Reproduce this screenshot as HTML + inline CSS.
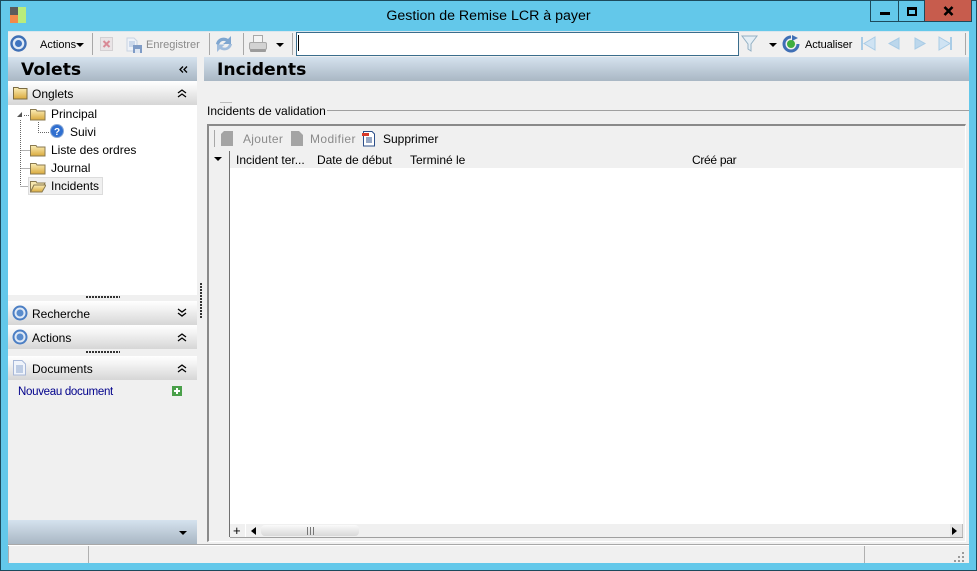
<!DOCTYPE html>
<html><head><meta charset="utf-8"><style>
html,body{margin:0;padding:0}
body{width:977px;height:571px;overflow:hidden;position:relative;background:#63c8ea;font-family:"Liberation Sans",sans-serif;font-size:12px;color:#000}
div,span,svg{position:absolute}
.t{white-space:nowrap;line-height:14px}
.hd{background:linear-gradient(#d5e2ee,#a9b7c4)}
.pn{left:8px;width:189px;height:24px;background:linear-gradient(#fff,#f4f4f4 30%,#d6d6d6)}
.sep{width:1px;height:22px;top:33px;background:#a8a8a8}
.g{color:#8a8a8a}
.h{font-family:"DejaVu Sans",sans-serif;font-size:17.2px;font-weight:bold;line-height:21px}
</style></head><body>
<svg width="0" height="0" style="left:0;top:0"><defs>
<linearGradient id="fo" x1="0" y1="0" x2="0" y2="1"><stop offset="0" stop-color="#fbeeb8"/><stop offset="1" stop-color="#d9a93c"/></linearGradient>
</defs></svg>
<div style="left:0;top:0;width:975px;height:569px;border:1px solid #1c4a5c"></div>
<div style="left:10px;top:7px;width:8px;height:8px;background:#5c5c5c"></div>
<div style="left:10px;top:15px;width:8px;height:8px;background:#f28a4a"></div>
<div style="left:18px;top:7px;width:8px;height:16px;background:#b9ec7c"></div>
<div class="t" style="left:0;width:977px;top:8px;text-align:center;font-size:14.2px;line-height:17px">Gestion de Remise LCR à payer</div>
<div style="left:870px;top:0;width:54px;border:1px solid #1c4a5c;border-top:0;height:21px"></div>
<div style="left:898px;top:0;width:1px;height:21px;background:#1c4a5c"></div>
<div style="left:924px;top:0;width:46px;height:21px;background:#c75c4d;border:1px solid #1c4a5c;border-top:0"></div>
<div style="left:880px;top:12px;width:10px;height:3px;background:#000"></div>
<div style="left:907px;top:7px;width:6px;height:4px;border:2px solid #000;border-top-width:3px"></div>
<svg style="left:943px;top:6px" width="11" height="10"><path d="M1.500 1L9.500 9M9.500 1L1.500 9" stroke="#000" stroke-width="2.600"/></svg>

<div style="left:8px;top:31px;width:961px;height:532px;background:#f0f0f0"></div>
<div style="left:8px;top:31px;width:961px;height:1px;background:#d9e6ee"></div>

<svg style="left:10px;top:35px" width="18" height="18"><circle cx="8.500" cy="8.500" r="7" fill="#dfe9f6" stroke="#3f6fb5" stroke-width="2.400"/><circle cx="8.500" cy="8.500" r="3.500" fill="#3f74c0"/></svg>
<div class="t" style="left:40px;top:38px;font-size:11px">Actions</div>
<svg style="left:76px;top:43px" width="9" height="5"><path d="M0 0H8L4 4Z" fill="#000"/></svg>
<div class="sep" style="left:92px"></div>
<svg style="left:100px;top:37px" width="14" height="15"><rect x="0.500" y="0.500" width="12" height="13" fill="#e9e4e6" stroke="#d3d0d2"/><path d="M3.500 4L9.500 10M9.500 4L3.500 10" stroke="#d98a96" stroke-width="2"/></svg>
<svg style="left:126px;top:37px" width="17" height="16"><path d="M1 1H8L11 4V14H1Z" fill="#eef2f8" stroke="#c8d3e2"/><path d="M3 5H9M3 7H9M3 9H9" stroke="#a8bedb"/><rect x="7" y="8" width="9" height="8" fill="#7f9cc6"/><rect x="9" y="12" width="5" height="4" fill="#dfe7f2"/></svg>
<div class="t g" style="left:146px;top:38px;font-size:11px">Enregistrer</div>
<div class="sep" style="left:209px"></div>
<svg style="left:215px;top:35px" width="18" height="18"><path d="M1 9C2 3 9 1 13 4L16 1V9H8L11 6.500C8 5 5 6 4 10Z" fill="#7fa6d0"/><path d="M17 9C16 15 9 17 5 14L2 17V9.500H10L7 12C10 13.500 13 12.500 14 9Z" fill="#a0bcdc"/></svg>
<div class="sep" style="left:243px"></div>
<svg style="left:249px;top:35px" width="18" height="18"><rect x="4.500" y="0.500" width="9" height="8" fill="#f4f4f4" stroke="#a8a8a8"/><rect x="0.500" y="7.500" width="17" height="7" rx="1.500" fill="#d2d2d2" stroke="#a8a8a8"/><rect x="1" y="14" width="16" height="3" rx="1" fill="#9c9c9c"/></svg>
<svg style="left:276px;top:43px" width="9" height="5"><path d="M0 0H8L4 4Z" fill="#000"/></svg>
<div class="sep" style="left:292px"></div>
<div style="left:296px;top:32px;width:441px;height:22px;background:#fff;border:1px solid #3a6d8c"></div>
<div style="left:298px;top:35px;width:1px;height:16px;background:#000"></div>
<svg style="left:741px;top:34px" width="18" height="19"><path d="M1 2H16L10 10V17L7 15V10Z" fill="#e4eef5" stroke="#93b0c4"/></svg>
<svg style="left:769px;top:43px" width="9" height="5"><path d="M0 0H8L4 4Z" fill="#000"/></svg>
<svg style="left:782px;top:35px" width="18" height="18"><path d="M9 2A7 7 0 1 0 16 9" fill="none" stroke="#3f6fb5" stroke-width="3"/><path d="M10 0L16 3L10 6Z" fill="#3f6fb5"/><circle cx="9" cy="9" r="4" fill="#3fae3f"/></svg>
<div class="t" style="left:805px;top:38px;font-size:11px;letter-spacing:-.1px">Actualiser</div>
<svg style="left:860px;top:36px" width="16" height="16"><rect x="1" y="1" width="2" height="13" fill="#a9cce6"/><path d="M15 1V14L4 7.500Z" fill="#cfe3f3" stroke="#a9cce6"/></svg>
<svg style="left:887px;top:36px" width="14" height="16"><path d="M12 2V13L2 7.500Z" fill="#bcd7ec" stroke="#a9cce6"/></svg>
<svg style="left:913px;top:36px" width="14" height="16"><path d="M2 2V13L12 7.500Z" fill="#bcd7ec" stroke="#a9cce6"/></svg>
<svg style="left:938px;top:36px" width="16" height="16"><rect x="12" y="1" width="2" height="13" fill="#a9cce6"/><path d="M1 1V14L12 7.500Z" fill="#cfe3f3" stroke="#a9cce6"/></svg>
<div class="sep" style="left:965px"></div>

<div class="hd" style="left:8px;top:57px;width:189px;height:24px"></div>
<div class="t h" style="left:21px;top:60px">Volets</div>
<svg style="left:179px;top:66px" width="9" height="8"><path d="M4 .5L1 3.500L4 6.500M8 .5L5 3.500L8 6.500" fill="none" stroke="#000" stroke-width="1.300"/></svg>
<div class="hd" style="left:204px;top:57px;width:765px;height:24px"></div>
<div class="t h" style="left:217px;top:60px">Incidents</div>

<div class="pn" style="top:81px"></div>
<svg style="left:13px;top:86px" width="15" height="14"><path d="M.5 1.500H5L6 2.500H14V13H.5Z" fill="url(#fo)" stroke="#7a6a40"/></svg>
<div class="t" style="left:32px;top:87px">Onglets</div>
<svg style="left:177px;top:89px" width="11" height="10"><path d="M1 4L5 1L9 4M1 8L5 5L9 8" fill="none" stroke="#000" stroke-width="1.300"/></svg>
<div style="left:8px;top:105px;width:189px;height:190px;background:#fff"></div>
<svg style="left:8px;top:105px" width="60" height="85"><path d="M12.500 15V81M12.500 45.500H22M12.500 63.500H22M12.500 81.500H22M30.500 17V27.500H42M16 10.500H22" fill="none" stroke="#666" stroke-dasharray="1 1"/><path d="M9 12L14 7V12Z" fill="#555"/></svg>
<div style="left:28px;top:177px;width:73px;height:16px;background:#f0f0f0;border:1px solid #dcdcdc"></div>
<svg style="left:30px;top:107px" width="16" height="14"><path d="M.5 2.500H6L7 4H15V13H.5Z" fill="url(#fo)" stroke="#8a7a50"/></svg>
<svg style="left:30px;top:143px" width="16" height="14"><path d="M.5 2.500H6L7 4H15V13H.5Z" fill="url(#fo)" stroke="#8a7a50"/></svg>
<svg style="left:30px;top:161px" width="16" height="14"><path d="M.5 2.500H6L7 4H15V13H.5Z" fill="url(#fo)" stroke="#8a7a50"/></svg>
<svg style="left:30px;top:179px" width="16" height="14"><path d="M.5 2.500H6L7 4H15L14 6H4L.5 13Z" fill="#f6e6ae" stroke="#8a7a50"/><path d="M.5 13L4 6H16L12 13Z" fill="url(#fo)" stroke="#8a7a50"/></svg>
<svg style="left:50px;top:124px" width="15" height="15"><circle cx="7" cy="7" r="6.500" fill="#2f6fd0" stroke="#8aa9d6"/><text x="7" y="11" text-anchor="middle" font-size="10" font-weight="bold" fill="#fff" font-family="Liberation Sans">?</text></svg>
<div class="t" style="left:51px;top:107px">Principal</div>
<div class="t" style="left:70px;top:125px">Suivi</div>
<div class="t" style="left:51px;top:143px">Liste des ordres</div>
<div class="t" style="left:51px;top:161px">Journal</div>
<div class="t" style="left:51px;top:179px">Incidents</div>

<div style="left:86px;top:296px;width:34px;height:2px;background:repeating-linear-gradient(90deg,#333 0 2px,transparent 2px 3px)"></div>
<div class="pn" style="top:301px"></div>
<svg style="left:12px;top:305px" width="16" height="16"><circle cx="8" cy="8" r="6.500" fill="#dfe9f6" stroke="#4c7fc4" stroke-width="2"/><circle cx="8" cy="8" r="3.500" fill="#5a8ccc"/></svg>
<div class="t" style="left:32px;top:307px">Recherche</div>
<svg style="left:177px;top:308px" width="11" height="10"><path d="M1 1L5 4L9 1M1 5L5 8L9 5" fill="none" stroke="#000" stroke-width="1.300"/></svg>
<div class="pn" style="top:325px"></div>
<svg style="left:12px;top:329px" width="16" height="16"><circle cx="8" cy="8" r="6.500" fill="#dfe9f6" stroke="#4c7fc4" stroke-width="2"/><circle cx="8" cy="8" r="3.500" fill="#5a8ccc"/></svg>
<div class="t" style="left:32px;top:331px">Actions</div>
<svg style="left:177px;top:333px" width="11" height="10"><path d="M1 4L5 1L9 4M1 8L5 5L9 8" fill="none" stroke="#000" stroke-width="1.300"/></svg>
<div style="left:86px;top:351px;width:34px;height:2px;background:repeating-linear-gradient(90deg,#333 0 2px,transparent 2px 3px)"></div>
<div class="pn" style="top:356px"></div>
<svg style="left:13px;top:360px" width="14" height="16"><path d="M.5 .5H9L12.500 4V15H.5Z" fill="#f0f4fb" stroke="#a8b8d8"/><path d="M3 6H10M3 8H10M3 10H10M3 12H10" stroke="#8aa4cc"/></svg>
<div class="t" style="left:32px;top:362px">Documents</div>
<svg style="left:177px;top:364px" width="11" height="10"><path d="M1 4L5 1L9 4M1 8L5 5L9 8" fill="none" stroke="#000" stroke-width="1.300"/></svg>
<div class="t" style="left:18px;top:385px;color:#00008b;font-size:11.500px;letter-spacing:-.3px">Nouveau document</div>
<svg style="left:172px;top:386px" width="11" height="11"><rect width="10" height="10" fill="#4aa04a"/><path d="M5 2V8M2 5H8" stroke="#fff" stroke-width="2"/></svg>
<div class="hd" style="left:8px;top:520px;width:189px;height:24px"></div>
<svg style="left:179px;top:531px" width="9" height="5"><path d="M0 0H8L4 4Z" fill="#000"/></svg>

<div style="left:200px;top:283px;width:2px;height:35px;background:repeating-linear-gradient(#333 0 2px,transparent 2px 3px)"></div>
<div style="left:220px;top:102px;width:12px;height:1px;background:#bbb"></div>
<div class="t" style="left:207px;top:104px">Incidents de validation</div>
<div style="left:327px;top:110px;width:642px;height:1px;background:#a0a0a0"></div>

<div style="left:207px;top:124px;width:756px;height:415px;border:2px solid #8a8a8a;border-right:1px solid #fff;border-bottom:1px solid #fff;background:#f0f0f0"></div>
<div style="left:214px;top:130px;width:1px;height:17px;background:#a8a8a8"></div>
<svg style="left:220px;top:131px" width="15" height="16"><path d="M4 0H13V15H1V3Z" fill="#a4a4a4"/></svg>
<div class="t g" style="left:243px;top:132px;letter-spacing:.3px">Ajouter</div>
<svg style="left:290px;top:131px" width="15" height="16"><path d="M1 0H9L13 4V15H1Z" fill="#a4a4a4"/></svg>
<div class="t g" style="left:310px;top:132px;letter-spacing:.4px">Modifier</div>
<svg style="left:361px;top:131px" width="15" height="16"><path d="M2.500 .5H11L13.500 3V15H2.500Z" fill="#fff" stroke="#2c4f8a"/><path d="M5 7H11M5 9H11M5 11H11" stroke="#2c4f8a"/><rect x="1" y="2" width="7" height="3" fill="#d83a2a"/></svg>
<div class="t" style="left:383px;top:132px">Supprimer</div>

<div style="left:230px;top:151px;width:733px;height:17px;background:#f0f0f0"></div>
<div style="left:230px;top:168px;width:733px;height:356px;background:#fff"></div>
<div style="left:229px;top:151px;width:1px;height:386px;background:#707070"></div>
<svg style="left:214px;top:157px" width="9" height="5"><path d="M0 0H8L4 4Z" fill="#000"/></svg>
<div class="t" style="left:236px;top:153px">Incident ter...</div>
<div class="t" style="left:317px;top:153px;letter-spacing:-.05px">Date de début</div>
<div class="t" style="left:410px;top:153px">Terminé le</div>
<div class="t" style="left:692px;top:153px;letter-spacing:-.3px">Créé par</div>

<div style="left:230px;top:524px;width:733px;height:13px;background:#f0f0f0;border-bottom:1px solid #a0a0a0"></div>
<div class="t" style="left:233px;top:524px;font-size:13px">+</div>
<div style="left:245px;top:524px;width:1px;height:13px;background:#fff"></div>
<svg style="left:251px;top:527px" width="6" height="9"><path d="M5 0V8L0 4Z" fill="#000"/></svg>
<div style="left:261px;top:525px;width:98px;height:11px;border-radius:4px;background:linear-gradient(#fafafa,#d8d8d8)"></div>
<div style="left:307px;top:527px;width:7px;height:8px;background:repeating-linear-gradient(90deg,#777 0 1px,transparent 1px 3px)"></div>
<div style="left:950px;top:524px;width:12px;height:13px;background:#e4e4e4;border-right:1px solid #bbb"></div>
<svg style="left:952px;top:527px" width="6" height="9"><path d="M0 0V8L5 4Z" fill="#000"/></svg>

<div style="left:8px;top:544px;width:961px;height:1px;background:#a8a8a8"></div>
<div style="left:8px;top:545px;width:961px;height:18px;background:#f0f0f0;border-top:1px solid #fff;box-sizing:border-box"></div>
<div style="left:8px;top:546px;width:1px;height:17px;background:#b0b0b0"></div>
<div style="left:88px;top:546px;width:1px;height:17px;background:#b0b0b0"></div>
<div style="left:864px;top:546px;width:1px;height:17px;background:#b0b0b0"></div>
<svg style="left:953px;top:551px" width="12" height="11"><path d="M9 1h2v2H9zM5 5h2v2H5zM9 5h2v2H9zM1 9h2v2H1zM5 9h2v2H5zM9 9h2v2H9z" fill="#9a9a9a"/></svg>
</body></html>
